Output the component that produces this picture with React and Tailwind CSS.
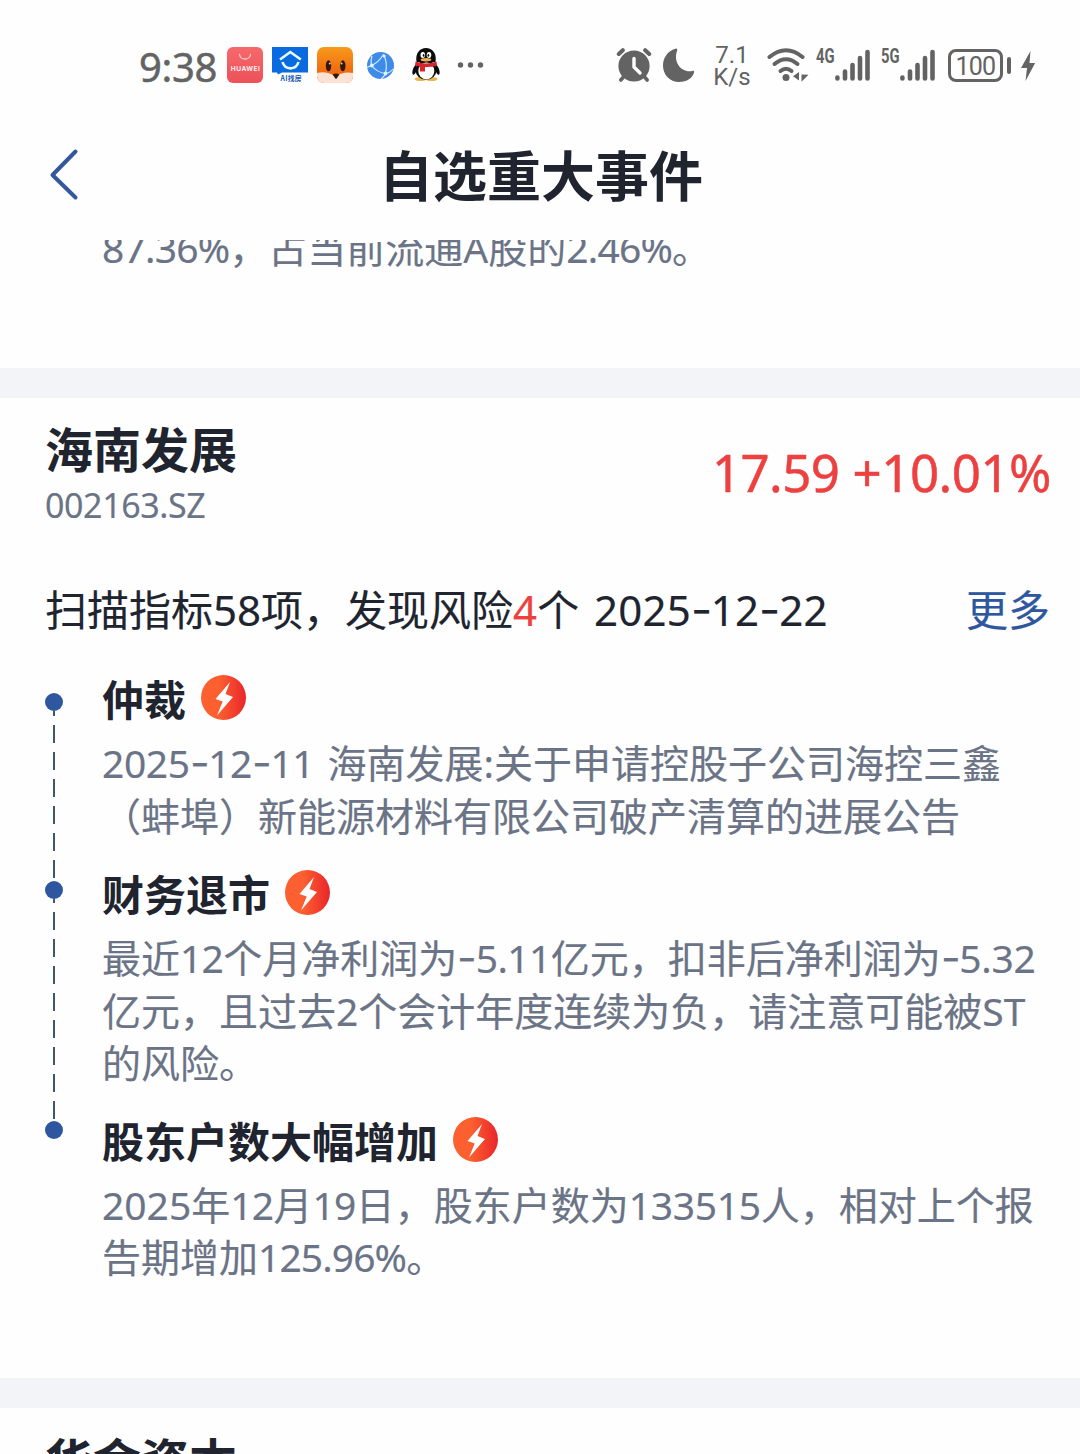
import React from "react";

const INK = "#636363";

function StoreIcon() {
  return (
    <svg className="ml-[11px] h-9 w-9 shrink-0" viewBox="0 0 36 36">
      <defs>
        <linearGradient id="store" x1="0" y1="0" x2="0" y2="1">
          <stop offset="0" stopColor="#f5696c" />
          <stop offset="1" stopColor="#ee5058" />
        </linearGradient>
      </defs>
      <rect width="36" height="36" rx="6" fill="url(#store)" />
      <path d="M12.500 7.500c1 6 10 6 11 0" fill="none" stroke="#fbc9c9" strokeWidth="1.300" strokeLinecap="round" />
      <text x="18.300" y="24" textAnchor="middle" fontSize="6.600" fontWeight="600" fill="#fff" textLength="29" fontFamily="Inter, sans-serif">HUAWEI</text>
    </svg>
  );
}

function SearchHouseIcon() {
  return (
    <svg className="ml-[9px] h-9 w-9 shrink-0" viewBox="0 0 36 36">
      <path d="M0 0h36v25.500H10l-4 2-1-2H0z" fill="#0a6be0" />
      <path d="M8 12.500l10.300-7.500 10.500 7.500" fill="none" stroke="#e6fbff" strokeWidth="2.600" />
      <path d="M10.500 15c2.500 8.500 13.500 8.500 16 0" fill="none" stroke="#e6fbff" strokeWidth="2.600" />
      <text x="19" y="34.200" textAnchor="middle" fontSize="6.800" fontWeight="700" fill="#1458b0" textLength="21" fontFamily="'Noto Sans CJK SC', sans-serif">AI找房</text>
    </svg>
  );
}

function FoxIcon() {
  return (
    <svg className="ml-[9px] h-9 w-9 shrink-0" viewBox="0 0 36 36">
      <defs>
        <linearGradient id="fox" x1="0" y1="0" x2="0" y2="1">
          <stop offset="0" stopColor="#f79a1c" />
          <stop offset="0.700" stopColor="#f06a10" />
        </linearGradient>
        <clipPath id="foxclip"><rect width="36" height="36" rx="7" /></clipPath>
      </defs>
      <g clipPath="url(#foxclip)">
        <rect width="36" height="36" fill="url(#fox)" />
        <path d="M0 26c7-2 12 0 18.500 3 6-3 11-4.500 17.500-3V36H0z" fill="#fbe0d4" />
        <ellipse cx="11.500" cy="18.800" rx="2.700" ry="5.500" fill="#33160c" />
        <ellipse cx="25.800" cy="18.800" rx="2.700" ry="5.500" fill="#33160c" />
        <circle cx="12.800" cy="16.500" r="1" fill="#f7c9a0" />
        <circle cx="24.600" cy="16.500" r="1" fill="#f7c9a0" />
        <path d="M15.500 27.500q3.500-2 7 0l-3.500 4.800z" fill="#33160c" />
      </g>
    </svg>
  );
}

function GlobeIcon() {
  return (
    <svg className="ml-[14px] h-[27px] w-[27px] shrink-0" viewBox="0 0 27 27">
      <circle cx="13.500" cy="13.500" r="13.500" fill="#3f8bea" />
      <g fill="none" stroke="#d4ecff" strokeWidth="1.200">
        <path d="M4.500 13.500Q11 11 16.500 2.500" />
        <path d="M4.500 13.500Q10 20.500 18.500 21.500" />
        <path d="M16.500 2.500Q21 11 18.500 21.500" />
        <path d="M18.500 21.500Q23 21 26 17M18.500 21.500Q17 25 14 27M4.500 13.500L0 15.500M4.500 13.500Q3.500 9 5 4" />
      </g>
      <circle cx="4.800" cy="13.500" r="1.900" fill="#dff2ff" />
      <circle cx="17.200" cy="4" r="1.500" fill="#dff2ff" />
      <circle cx="18.500" cy="21.500" r="1.900" fill="#dff2ff" />
    </svg>
  );
}

function PenguinIcon() {
  return (
    <svg className="ml-[18px] h-[34px] w-[28px] shrink-0" viewBox="0 0 28 34">
      <ellipse cx="8.500" cy="31" rx="6" ry="2" fill="#eab64c" />
      <ellipse cx="19.500" cy="31" rx="6" ry="2" fill="#eab64c" />
      <path d="M5 15C1 19-.5 24 .8 26.500c1 1 2.500-1 3.200-2.500M23 15c4 4 5.500 9 4.200 11.500-1 1-2.500-1-3.200-2.500" fill="#0b0b0b" />
      <ellipse cx="14" cy="22" rx="10.500" ry="9.800" fill="#0b0b0b" />
      <ellipse cx="14.300" cy="23" rx="8" ry="8.500" fill="#fff" />
      <path d="M4.500 14C3 5 8 0 14 0s11 5 9.500 14z" fill="#0b0b0b" />
      <ellipse cx="10.800" cy="7" rx="2.300" ry="3" fill="#fff" />
      <ellipse cx="17" cy="7" rx="2.300" ry="3" fill="#fff" />
      <ellipse cx="11.600" cy="7.400" rx=".9" ry="1.400" fill="#111" />
      <ellipse cx="16.400" cy="7.400" rx=".9" ry="1.400" fill="#111" />
      <ellipse cx="14" cy="11.800" rx="5.300" ry="1.700" fill="#eeb04a" />
      <path d="M3.500 13.500q10.500 4 21 0l.5 4Q19 19.500 13 19V23.500H8v-5L3 17.500z" fill="#d9232e" />
    </svg>
  );
}

function AlarmIcon() {
  return (
    <svg className="h-9 w-9 shrink-0" viewBox="0 0 36 36">
      <circle cx="18" cy="19" r="15.600" fill={INK} />
      <g fill="none" stroke={INK} strokeLinecap="round" strokeWidth="4">
        <path d="M2.800 7l4-3.800M33.200 7l-4-3.800" />
        <path d="M7 30.500L4.800 33M29 30.500l2.200 2.500" strokeWidth="3.600" />
      </g>
      <path d="M18 11.500V20l6 6" fill="none" stroke="#fff" strokeWidth="3.400" strokeLinecap="round" strokeLinejoin="round" />
    </svg>
  );
}

function MoonIcon() {
  return (
    <svg className="ml-[11px] h-[34px] w-8 shrink-0" viewBox="0 0 32 34">
      <path d="M12.500.7C4.500 3 0 10 0 17.500 0 27 7 34 16 34c8 0 13.500-4 15-9.500.4-1.300-.4-2-1.600-1.600C19.500 25.500 9.500 15 14.200 2.500c.4-1.200-.4-2.200-1.700-1.800z" fill={INK} />
    </svg>
  );
}

function WifiIcon() {
  return (
    <svg className="ml-[16px] h-9 w-[42px] shrink-0" viewBox="0 0 42 36">
      <g fill="none" stroke={INK} strokeWidth="4" strokeLinecap="round">
        <path d="M2.500 10Q19-3.500 35.500 10" />
        <path d="M7.500 17Q19 7.500 30.500 17" />
        <path d="M13.500 24q5.500-4.500 11 0" />
      </g>
      <circle cx="19" cy="30.500" r="3.500" fill={INK} />
      <path d="M32 25v8.500L26 29.300zM34.500 27.500l7 .2-7 7z" fill={INK} />
    </svg>
  );
}

function Signal({ label, className }) {
  return (
    <div className={className + " flex h-9 shrink-0 items-start"}>
      <span className="h-5 w-[19px] text-[20px] leading-[18px] font-bold font-[Roboto,sans-serif]">
        <span className="inline-block origin-left scale-x-[0.74]">{label}</span>
      </span>
      <svg className="h-9 w-9" viewBox="0 0 36 36">
        <g stroke={INK} strokeWidth="4.600" strokeLinecap="round">
          <path d="M2.400 31.500v-1M10 31.500V24.500M17.500 31.500V18M25 31.500V11M32.500 31.500V5" />
        </g>
      </svg>
    </div>
  );
}

function StatusBar() {
  return (
    <div className="flex h-[130px] shrink-0 items-center text-[#636363]">
      <span className="relative top-0.5 ml-[139px] w-[77px] text-[40px] leading-[44px] tracking-[-0.3px] [-webkit-text-stroke:0.5px]">9:38</span>
      <StoreIcon />
      <SearchHouseIcon />
      <FoxIcon />
      <GlobeIcon />
      <PenguinIcon />
      <svg className="ml-[17px] h-2 w-[28px] shrink-0" viewBox="0 0 28 8">
        <circle cx="3.500" cy="4" r="2.700" fill={INK} />
        <circle cx="13.500" cy="4" r="2.700" fill={INK} />
        <circle cx="23.500" cy="4" r="2.700" fill={INK} />
      </svg>
      <div className="ml-auto flex w-[464px] items-center">
        <AlarmIcon />
        <MoonIcon />
        <div className="ml-[18px] w-[38px] pt-0.5 text-center font-[Roboto,sans-serif] text-[24px] leading-[22px]">
          <div>7.1</div>
          <div>K/s</div>
        </div>
        <WifiIcon />
        <Signal label="4G" className="ml-[7px]" />
        <Signal label="5G" className="ml-[10px]" />
        <div className="ml-[12px] flex h-[33px] w-[55px] shrink-0 items-center justify-center rounded-[8px] border-[3px] border-[#636363] font-[Roboto,sans-serif] text-[25px] leading-none tracking-[-0.8px]">
          <span className="relative top-px">100</span>
        </div>
        <div className="ml-[4px] h-[17px] w-1 shrink-0 rounded-full bg-[#636363]" />
        <svg className="relative top-px ml-[10px] h-[30px] w-[14px] shrink-0" viewBox="0 0 14 30">
          <path d="M9.500 0L0 17h6L4.500 30 14.200 12H8.500z" fill={INK} />
        </svg>
      </div>
    </div>
  );
}

function BoltBadge() {
  return (
    <svg className="ml-[15px] h-[46px] w-[46px] shrink-0" viewBox="0 0 46 46">
      <defs>
        <linearGradient id="badge" x1="0" y1="0" x2="1" y2="0">
          <stop offset="0.400" stopColor="#fc5f30" />
          <stop offset="1" stopColor="#e9262b" />
        </linearGradient>
      </defs>
      <circle cx="22.500" cy="22.500" r="22.500" fill="url(#badge)" />
      <path d="M29 7L14.500 24l7.200 2.500L16 40.500 32 22l-7.500-3z" fill="#fff" />
    </svg>
  );
}

function Dash() {
  return <span className="relative -top-px inline-block w-[0.474em] origin-left scale-x-[1.1] font-[Inter,sans-serif]">-</span>;
}

function Stop() {
  return <span>。</span>;
}

function Event({ title, children, className }) {
  return (
    <section className={className}>
      <h3 className="flex h-[60px] items-center text-[42px] leading-[60px] font-bold text-[#20242f]">
        <span className="relative top-[1.5px]">{title}</span>
        <BoltBadge />
      </h3>
      <div className="mt-[9px] text-[39px] leading-[52px] whitespace-nowrap text-[#6b7486] [-webkit-text-stroke:0.15px]">{children}</div>
    </section>
  );
}

function Dot() {
  return <i className="block h-[18px] w-[18px] shrink-0 rounded-full bg-[#2f57a0]" />;
}

export default function App() {
  return (
    <div className="flex h-[1454px] w-[1080px] flex-col overflow-hidden bg-[#fefefe] font-['Noto_Sans','Noto_Sans_CJK_SC',sans-serif]" lang="zh-CN">
      <StatusBar />
      <header className="flex h-[110px] shrink-0 items-start">
        <svg className="mt-[18px] ml-[48px] h-[54px] w-8" viewBox="0 0 32 54">
          <path d="M27.500 3.500L4.500 27l23 22.500" fill="none" stroke="#34589c" strokeWidth="4" strokeLinecap="round" strokeLinejoin="round" />
        </svg>
        <h1 className="ml-[299px] text-[54px] leading-[92px] font-bold text-[#20242f]">自选重大事件</h1>
      </header>
      <div className="flex h-32 shrink-0 items-start overflow-hidden">
        <p className="-mt-[18px] ml-[102px] text-[39px] leading-[52px] whitespace-nowrap text-[#6b7486] [-webkit-text-stroke:0.15px]">
          <span className="tracking-[-0.8px]">87.36%</span>，占当前流通<span>A</span>股的<span className="tracking-[-0.8px]">2.46%</span><Stop />
        </p>
      </div>
      <div className="h-[30px] shrink-0 bg-[#f2f4f7]" />

      <main className="h-[980px] shrink-0">
        <div className="flex h-[152px] justify-between pr-[29px] pl-[45px]">
          <div className="pt-[21px]">
            <h2 className="text-[48px] leading-[62px] font-bold text-[#20242f]">海南发展</h2>
            <p className="mt-px text-[34px] leading-[46px] tracking-[-0.4px] text-[#6b7486] [-webkit-text-stroke:0.15px]">002163.SZ</p>
          </div>
          <p className="pt-[43px] text-[51px] leading-[62px] whitespace-nowrap text-[#ed4040] [-webkit-text-stroke:0.5px]">
            <span className="tracking-[-0.6px]">17.59</span> <span className="tracking-[-0.5px]">+10.01%</span>
          </p>
        </div>
        <div className="flex h-[120px] justify-between pr-[30px] pl-[45px] text-[42px] leading-[119px] whitespace-nowrap text-[#20242f] [-webkit-text-stroke:0.15px]">
          <p>
            扫描指标<span>58</span>项，发现风险<span className="text-[#ed4040]">4</span>个 <span className="ml-1 tracking-[0.2px]">2025<Dash />12<Dash />22</span>
          </p>
          <p className="text-[#2f57a0]">更多</p>
        </div>
        <div className="flex pl-[45px]">
          <div className="flex w-[18px] flex-col items-center pt-[23px]">
            <Dot />
            <i className="block h-[170px] w-0.5 bg-[repeating-linear-gradient(to_bottom,#3f5768_0_5px,transparent_5px_14px,#3f5768_14px_27px)]" />
            <Dot />
            <i className="block h-[222px] w-0.5 bg-[repeating-linear-gradient(to_bottom,#3f5768_0_4px,transparent_4px_13px,#3f5768_13px_27px)]" />
            <Dot />
          </div>
          <div className="ml-[39px]">
            <Event title="仲裁" className="-mt-[2px]">
              <p><span className="tracking-[-0.4px]">2025<Dash />12<Dash />11</span> <span className="ml-[3px]">海南发展</span><span>:</span>关于申请控股子公司海控三鑫</p>
              <p>（蚌埠）新能源材料有限公司破产清算的进展公告</p>
            </Event>
            <Event title="财务退市" className="mt-[21px]">
              <p>最近<span className="tracking-[-0.7px]">12</span>个月净利润为<span className="tracking-[-0.6px]"><Dash />5.11</span>亿元，扣非后净利润为<Dash /><span className="tracking-[-0.3px]">5.32</span></p>
              <p>亿元，且过去<span>2</span>个会计年度连续为负，请注意可能被<span>ST</span></p>
              <p>的风险<Stop /></p>
            </Event>
            <Event title="股东户数大幅增加" className="mt-[21px]">
              <p><span>2025</span>年<span className="tracking-[-0.7px]">12</span>月<span className="tracking-[-0.7px]">19</span>日，股东户数为<span className="tracking-[-0.3px]">133515</span>人，相对上个报</p>
              <p>告期增加<span className="tracking-[-0.9px]">125.96%</span><Stop /></p>
            </Event>
          </div>
        </div>
      </main>

      <div className="h-[30px] shrink-0 bg-[#f2f4f7]" />
      <div className="flex-1 overflow-hidden pt-[22px] pl-[45px]">
        <h2 className="text-[48px] leading-[62px] font-bold text-[#20242f]">华金资本</h2>
      </div>
    </div>
  );
}
